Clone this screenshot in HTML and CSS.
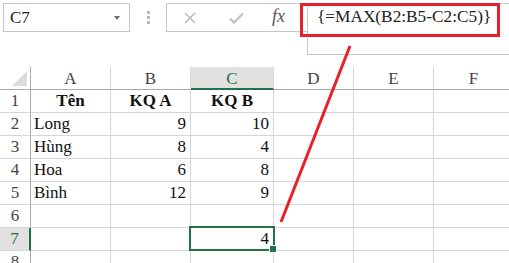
FILE: index.html
```html
<!DOCTYPE html>
<html>
<head>
<meta charset="utf-8">
<link rel="stylesheet" href="styles.css">
</head>
<body>
<div class="page">
  <div class="toolbar">
    <div class="namebox"><span>C7</span><span class="arrow"></span></div>
    <div class="dots"><i></i><i></i><i></i></div>
    <div class="tools">
      <svg class="ico-x" width="12" height="12" viewBox="0 0 12 12"><path d="M1 1L11 11M11 1L1 11" stroke="#b4b4b4" stroke-width="1.4" fill="none"/></svg>
      <svg class="ico-ok" width="15" height="12" viewBox="0 0 15 12"><path d="M1 6.5L5 10.5L14 1.5" stroke="#c4c4c4" stroke-width="2.4" fill="none"/></svg>
      <span class="fx">fx</span>
    </div>
    <div class="formula"><span>{=MAX(B2:B5-C2:C5)}</span></div>
    <div class="redbox"></div>
  </div>
  <div class="sheet">
    <div class="rh corner"><span class="tri"></span></div>
    <div class="ch">A</div><div class="ch">B</div><div class="ch sel">C</div><div class="ch">D</div><div class="ch">E</div><div class="ch">F</div>

    <div class="rh">1</div><div class="cell b center">Tên</div><div class="cell b center">KQ A</div><div class="cell b center">KQ B</div><div class="cell"></div><div class="cell"></div><div class="cell"></div>
    <div class="rh">2</div><div class="cell">Long</div><div class="cell num">9</div><div class="cell num">10</div><div class="cell"></div><div class="cell"></div><div class="cell"></div>
    <div class="rh">3</div><div class="cell">Hùng</div><div class="cell num">8</div><div class="cell num">4</div><div class="cell"></div><div class="cell"></div><div class="cell"></div>
    <div class="rh">4</div><div class="cell">Hoa</div><div class="cell num">6</div><div class="cell num">8</div><div class="cell"></div><div class="cell"></div><div class="cell"></div>
    <div class="rh">5</div><div class="cell">Bình</div><div class="cell num">12</div><div class="cell num">9</div><div class="cell"></div><div class="cell"></div><div class="cell"></div>
    <div class="rh">6</div><div class="cell"></div><div class="cell"></div><div class="cell"></div><div class="cell"></div><div class="cell"></div><div class="cell"></div>
    <div class="rh selrow">7</div><div class="cell"></div><div class="cell"></div><div class="cell num active">4<span class="frame"></span><span class="handle"></span></div><div class="cell"></div><div class="cell"></div><div class="cell"></div>
    <div class="rh">8</div><div class="cell"></div><div class="cell"></div><div class="cell"></div><div class="cell"></div><div class="cell"></div><div class="cell"></div>
  </div>
  <svg class="pointer" width="509" height="263" viewBox="0 0 509 263"><line x1="350" y1="46" x2="281" y2="222" stroke="#e8202a" stroke-width="3"/></svg>
</div>
</body>
</html>
```

FILE: styles.css
```css
html, body {
  margin: 0;
  padding: 0;
  background: #fff;
  overflow: hidden;
}
.page {
  position: relative;
  width: 509px;
  height: 263px;
  overflow: hidden;
  font-family: "Liberation Serif", "Times New Roman", Tinos, "Nimbus Roman", "DejaVu Serif", serif;
  color: #111;
}
.toolbar {
  position: relative;
  height: 67px;
  display: flex;
  align-items: flex-start;
  padding: 3px 0 0 3px;
  box-sizing: border-box;
}
.namebox {
  width: 127px;
  height: 29px;
  box-sizing: border-box;
  border: 1px solid #c6c6c6;
  display: flex;
  align-items: center;
  justify-content: space-between;
  padding: 0 9px 0 6px;
  font-size: 17px;
  color: #222;
}
.arrow {
  width: 0;
  height: 0;
  border-left: 3.5px solid transparent;
  border-right: 3.5px solid transparent;
  border-top: 4px solid #707070;
  margin-top: 1px;
}
.dots {
  width: 36px;
  display: flex;
  flex-direction: column;
  align-items: center;
  gap: 2px;
  padding-top: 8px;
}
.dots i {
  display: block;
  width: 3px;
  height: 3px;
  background: #b8b8b8;
}
.tools {
  width: 141px;
  height: 29px;
  box-sizing: border-box;
  border: 1px solid #c6c6c6;
  border-right: none;
  display: flex;
  align-items: center;
  padding-left: 17px;
}
.ico-x { margin-right: 33px; }
.ico-ok { margin-right: 28px; margin-top: 1px; }
.fx {
  font-style: italic;
  font-size: 18px;
  color: #555;
  margin-top: -2px;
}
.formula {
  flex: 1;
  height: 52px;
  box-sizing: border-box;
  border: 1px solid #c6c6c6;
  border-right: none;
  padding: 3px 0 0 9px;
  font-size: 17.3px;
  color: #222;
}
.redbox {
  position: absolute;
  left: 300px;
  top: 3px;
  width: 200px;
  height: 34px;
  box-sizing: border-box;
  border: 3px solid #e8202a;
}
.sheet {
  display: grid;
  grid-template-columns: 31px 80px 80px 83px 80px 80px 80px;
  grid-auto-rows: 23px;
  font-size: 17px;
}
.sheet > div {
  box-sizing: border-box;
  border-right: 1px solid #d6d6d6;
  border-bottom: 1px solid #d6d6d6;
  line-height: 22px;
  white-space: nowrap;
}
.cell { padding: 0 3px; }
.center { text-align: center; }
.b { font-weight: bold; }
.num { text-align: right; padding-right: 4px; }
.ch {
  text-align: center;
  color: #444;
  border-bottom-color: #ababab !important;
  line-height: 24px !important;
}
.ch.sel {
  background: #e1e1e1;
  color: #217346;
  border-bottom: 2px solid #217346 !important;
}
.rh {
  text-align: center;
  color: #444;
  border-right-color: #ababab !important;
}
.rh.selrow {
  background: #e1e1e1;
  color: #217346;
  border-right: 2px solid #217346 !important;
}
.corner {
  position: relative;
  border-bottom-color: #ababab !important;
}
.tri {
  position: absolute;
  right: 3px;
  bottom: 3px;
  width: 0;
  height: 0;
  border-left: 15px solid transparent;
  border-bottom: 15px solid #dcdcdc;
}
.active { position: relative; }
.frame {
  position: absolute;
  left: -2px;
  top: -2px;
  right: -2px;
  bottom: -1px;
  border: 2px solid #217346;
}
.handle {
  position: absolute;
  right: -4px;
  bottom: -3px;
  width: 6px;
  height: 6px;
  background: #217346;
  border: 1px solid #fff;
}
.pointer {
  position: absolute;
  left: 0;
  top: 0;
  pointer-events: none;
}
```
